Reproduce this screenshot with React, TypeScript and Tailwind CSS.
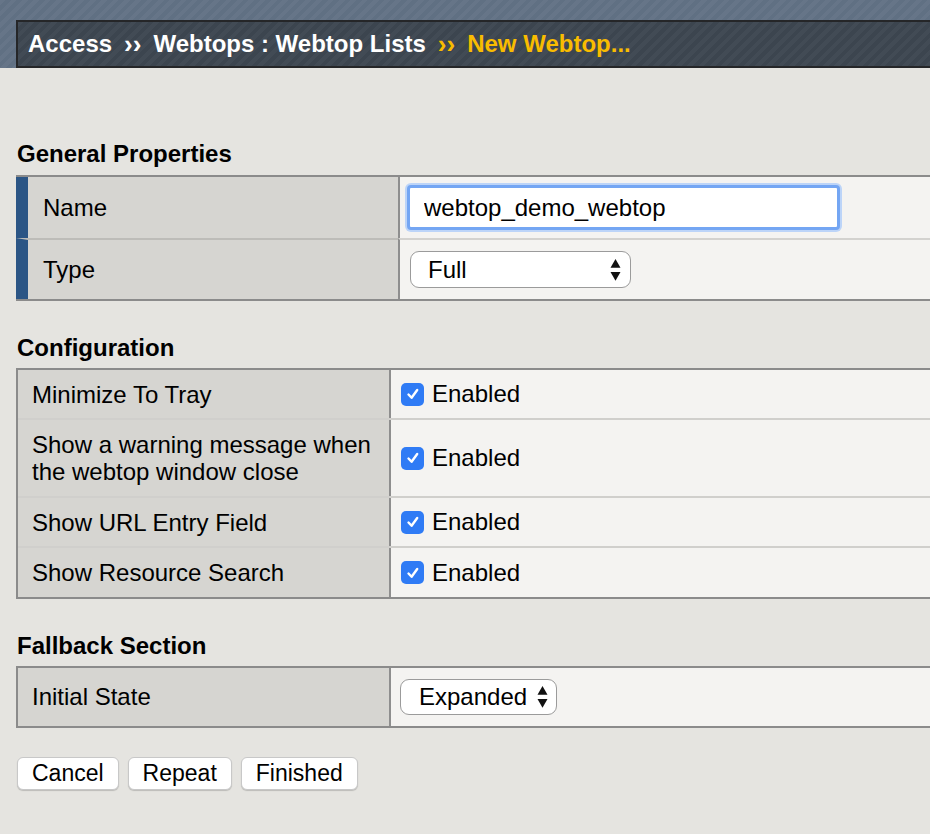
import type { ReactNode } from "react";

const configRows = [
  { label: ["Minimize To Tray"], h: "h-[48px]" },
  { label: ["Show a warning message when", "the webtop window close"], h: "h-[78px]" },
  { label: ["Show URL Entry Field"], h: "h-[50px]" },
  { label: ["Show Resource Search"], h: "h-[51px]" },
];

function SelectArrows() {
  return (
    <svg width="11" height="22" viewBox="0 0 11 22" className="shrink-0">
      <path d="M5.5 0 L10.5 8.8 L0.5 8.8 Z" fill="#111" />
      <path d="M0.5 13 L10.5 13 L5.5 21.8 Z" fill="#111" />
    </svg>
  );
}

function FakeSelect({ value, width, pl, pr, h }: { value: string; width: string; pl: string; pr: string; h: string }) {
  return (
    <div
      className={`flex items-center justify-between bg-white border-[1.5px] border-[#9b9b9b] rounded-[9px] ${width} ${pl} ${pr} ${h}`}
    >
      <span className="text-[24px] leading-none">{value}</span>
      <SelectArrows />
    </div>
  );
}

function Checkbox() {
  return (
    <span className="flex items-center justify-center w-[23px] h-[23px] rounded-[5px] bg-[#2f7bf5]">
      <svg width="16" height="16" viewBox="0 0 16 16">
        <path d="M3.5 8.5 L6.6 11.8 L12.2 4" fill="none" stroke="#fff" strokeWidth="2.4" strokeLinecap="round" strokeLinejoin="round" />
      </svg>
    </span>
  );
}

function SectionTitle({ children, className }: { children: ReactNode; className: string }) {
  return <h2 className={`text-[24px] leading-[28px] font-bold pl-[1px] ${className}`}>{children}</h2>;
}

export default function App() {
  return (
    <div className="min-h-[834px] w-full bg-[#e5e4e0] font-['Liberation_Sans',Arial,sans-serif] text-black overflow-hidden">
      {/* breadcrumb bar */}
      <div className="h-[68px] pt-[20px] pl-[16px] bg-[repeating-linear-gradient(135deg,#667588_0px,#667588_4px,#607083_4px,#607083_8px)]">
        <div className="h-[48px] flex items-center pl-[10px] border-2 border-r-0 border-[#252628] bg-[repeating-linear-gradient(135deg,#424b55_0px,#424b55_4px,#3c454f_4px,#3c454f_8px)] text-[24px] font-bold whitespace-nowrap">
          <span className="text-white">Access</span>
          <span className="text-white mx-[12px] text-[26px]">››</span>
          <span className="text-white">Webtops : Webtop Lists</span>
          <span className="text-[#f9bc00] mx-[12px] text-[26px]">››</span>
          <span className="text-[#f9bc00]">New Webtop...</span>
        </div>
      </div>

      <div className="pl-[16px]">
        <SectionTitle className="mt-[72px] mb-[7px]">General Properties</SectionTitle>
        <div className="border-y-2 border-[#8b8b8b] text-[24px]">
          <div className="flex h-[61px]">
            <div className="w-[382px] shrink-0 flex items-center pl-[15px] bg-[#d6d5d1] border-l-[12px] border-[#2b5585]">
              Name
            </div>
            <div className="flex-1 flex items-center pl-[7px] bg-[#f4f3f1] border-l-2 border-[#8e8e8e]">
              <input
                readOnly
                value="webtop_demo_webtop"
                className="w-[433px] h-[45px] pl-[14px] bg-white border-[3px] border-[#74a6f3] rounded-[4px] shadow-[0_0_0_2px_#bcd4f8] outline-none text-[24px] text-black"
              />
            </div>
          </div>
          <div className="flex h-[61px]">
            <div className="w-[382px] shrink-0 flex items-center pl-[15px] bg-[#d6d5d1] border-l-[12px] border-t-2 border-l-[#2b5585] border-t-[#bdbcb8]">
              Type
            </div>
            <div className="flex-1 flex items-center pl-[10px] bg-[#f4f3f1] border-l-2 border-t-2 border-l-[#8e8e8e] border-t-[#d3d2cf]">
              <FakeSelect value="Full" width="w-[221px]" pl="pl-[17px]" pr="pr-[9px]" h="h-[37px]" />
            </div>
          </div>
        </div>

        <SectionTitle className="mt-[33px] mb-[6px]">Configuration</SectionTitle>
        <div className="border-y-2 border-l-2 border-[#8b8b8b] text-[24px]">
          {configRows.map((row, i) => (
            <div key={i} className={`flex ${row.h} ${i > 0 ? "border-t-2" : ""} border-[#d0cfcc]`}>
              <div className="w-[371px] shrink-0 flex items-center pl-[14px] leading-[27px] bg-[#d6d5d1]">
                <div>
                  {row.label.map((l, j) => (
                    <div key={j}>{l}</div>
                  ))}
                </div>
              </div>
              <div className="flex-1 flex items-center gap-[8px] pl-[10px] bg-[#f4f3f1] border-l-2 border-[#8e8e8e]">
                <Checkbox />
                <span>Enabled</span>
              </div>
            </div>
          ))}
        </div>

        <SectionTitle className="mt-[33px] mb-[6px]">Fallback Section</SectionTitle>
        <div className="border-y-2 border-l-2 border-[#8b8b8b] text-[24px]">
          <div className="flex h-[58px]">
            <div className="w-[371px] shrink-0 flex items-center pl-[14px] bg-[#d6d5d1]">Initial State</div>
            <div className="flex-1 flex items-center pl-[9px] bg-[#f4f3f1] border-l-2 border-[#8e8e8e]">
              <FakeSelect value="Expanded" width="w-[157px]" pl="pl-[18px]" pr="pr-[8px]" h="h-[36px]" />
            </div>
          </div>
        </div>

        <div className="flex gap-[9px] mt-[29px] pl-[1px]">
          {["Cancel", "Repeat", "Finished"].map((b) => (
            <button
              key={b}
              className="h-[33px] px-[14px] bg-white border border-[#c8c8c8] rounded-[6px] shadow-[0_1px_1px_rgba(0,0,0,0.18)] text-[23px] leading-none text-black"
            >
              {b}
            </button>
          ))}
        </div>
      </div>
    </div>
  );
}
